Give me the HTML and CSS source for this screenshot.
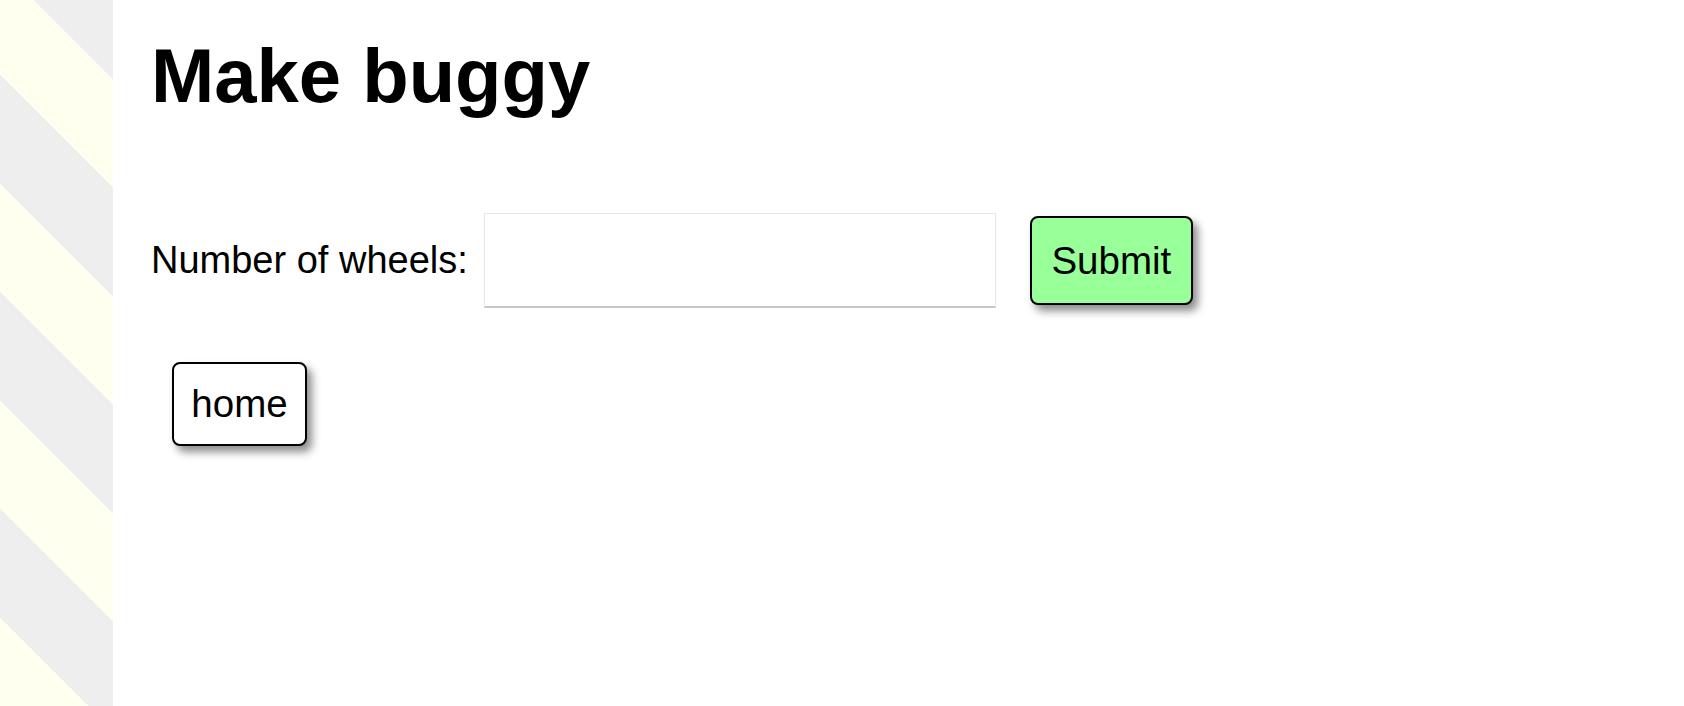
FILE: index.html
```html
<!DOCTYPE html>
<html lang="en">
<head>
<meta charset="utf-8">
<title>Make buggy</title>
<link rel="stylesheet" href="styles.css">
</head>
<body>
<aside class="stripes"></aside>
<main class="content">
  <h1 class="title">Make buggy</h1>
  <form class="buggy-form">
    <label class="field-label" for="wheels">Number of wheels:</label>
    <input class="field-input" id="wheels" type="text">
    <button class="btn btn-submit" type="submit">Submit</button>
  </form>
  <div class="nav">
    <a class="btn btn-home" href="#">home</a>
  </div>
</main>
</body>
</html>
```

FILE: styles.css
```css
html, body {
  margin: 0;
  padding: 0;
  background: #ffffff;
}

body {
  display: flex;
  min-height: 100vh;
  font-family: "Liberation Sans", Arial, Helvetica, sans-serif;
  color: #000;
}

.stripes {
  flex: 0 0 113px;
  height: 100vh;
  background-image: repeating-linear-gradient(45deg,
    #fffff0 0, #fffff0 62.9px,
    #eeeeee 62.9px, #eeeeee 139.6px,
    #fffff0 139.6px, #fffff0 153.3px);
}

.content {
  flex: 1;
  padding-left: 38px;
}

.title {
  margin: 33px 0 0;
  font-size: 76px;
  line-height: 1.135;
  font-weight: bold;
}

.buggy-form {
  display: flex;
  align-items: center;
  margin-top: 94px;
}

.field-label {
  font-size: 38px;
  line-height: 1.15;
  margin-right: 16px;
}

.field-input {
  box-sizing: border-box;
  width: 512px;
  height: 95px;
  margin: 0 34px 0 0;
  border: 1px solid #e6e6e6;
  border-bottom: 2px solid #c8c8c8;
  background: #fff;
  font-family: inherit;
  font-size: 38px;
  padding: 0 12px;
  outline: none;
}

.btn {
  box-sizing: border-box;
  display: inline-flex;
  align-items: center;
  justify-content: center;
  border: 2px solid #000;
  border-radius: 8px;
  box-shadow: 5px 6px 8px rgba(0, 0, 0, 0.45);
  font-family: inherit;
  font-size: 38.5px;
  line-height: 1.15;
  color: #000;
  text-decoration: none;
  cursor: pointer;
}

.btn-submit {
  width: 163px;
  height: 89px;
  background: #99ff99;
  padding: 0;
}

.nav {
  display: flex;
  margin-top: 54px;
  padding-left: 21px;
}

.btn-home {
  width: 135px;
  height: 84px;
  background: #fff;
}
```
